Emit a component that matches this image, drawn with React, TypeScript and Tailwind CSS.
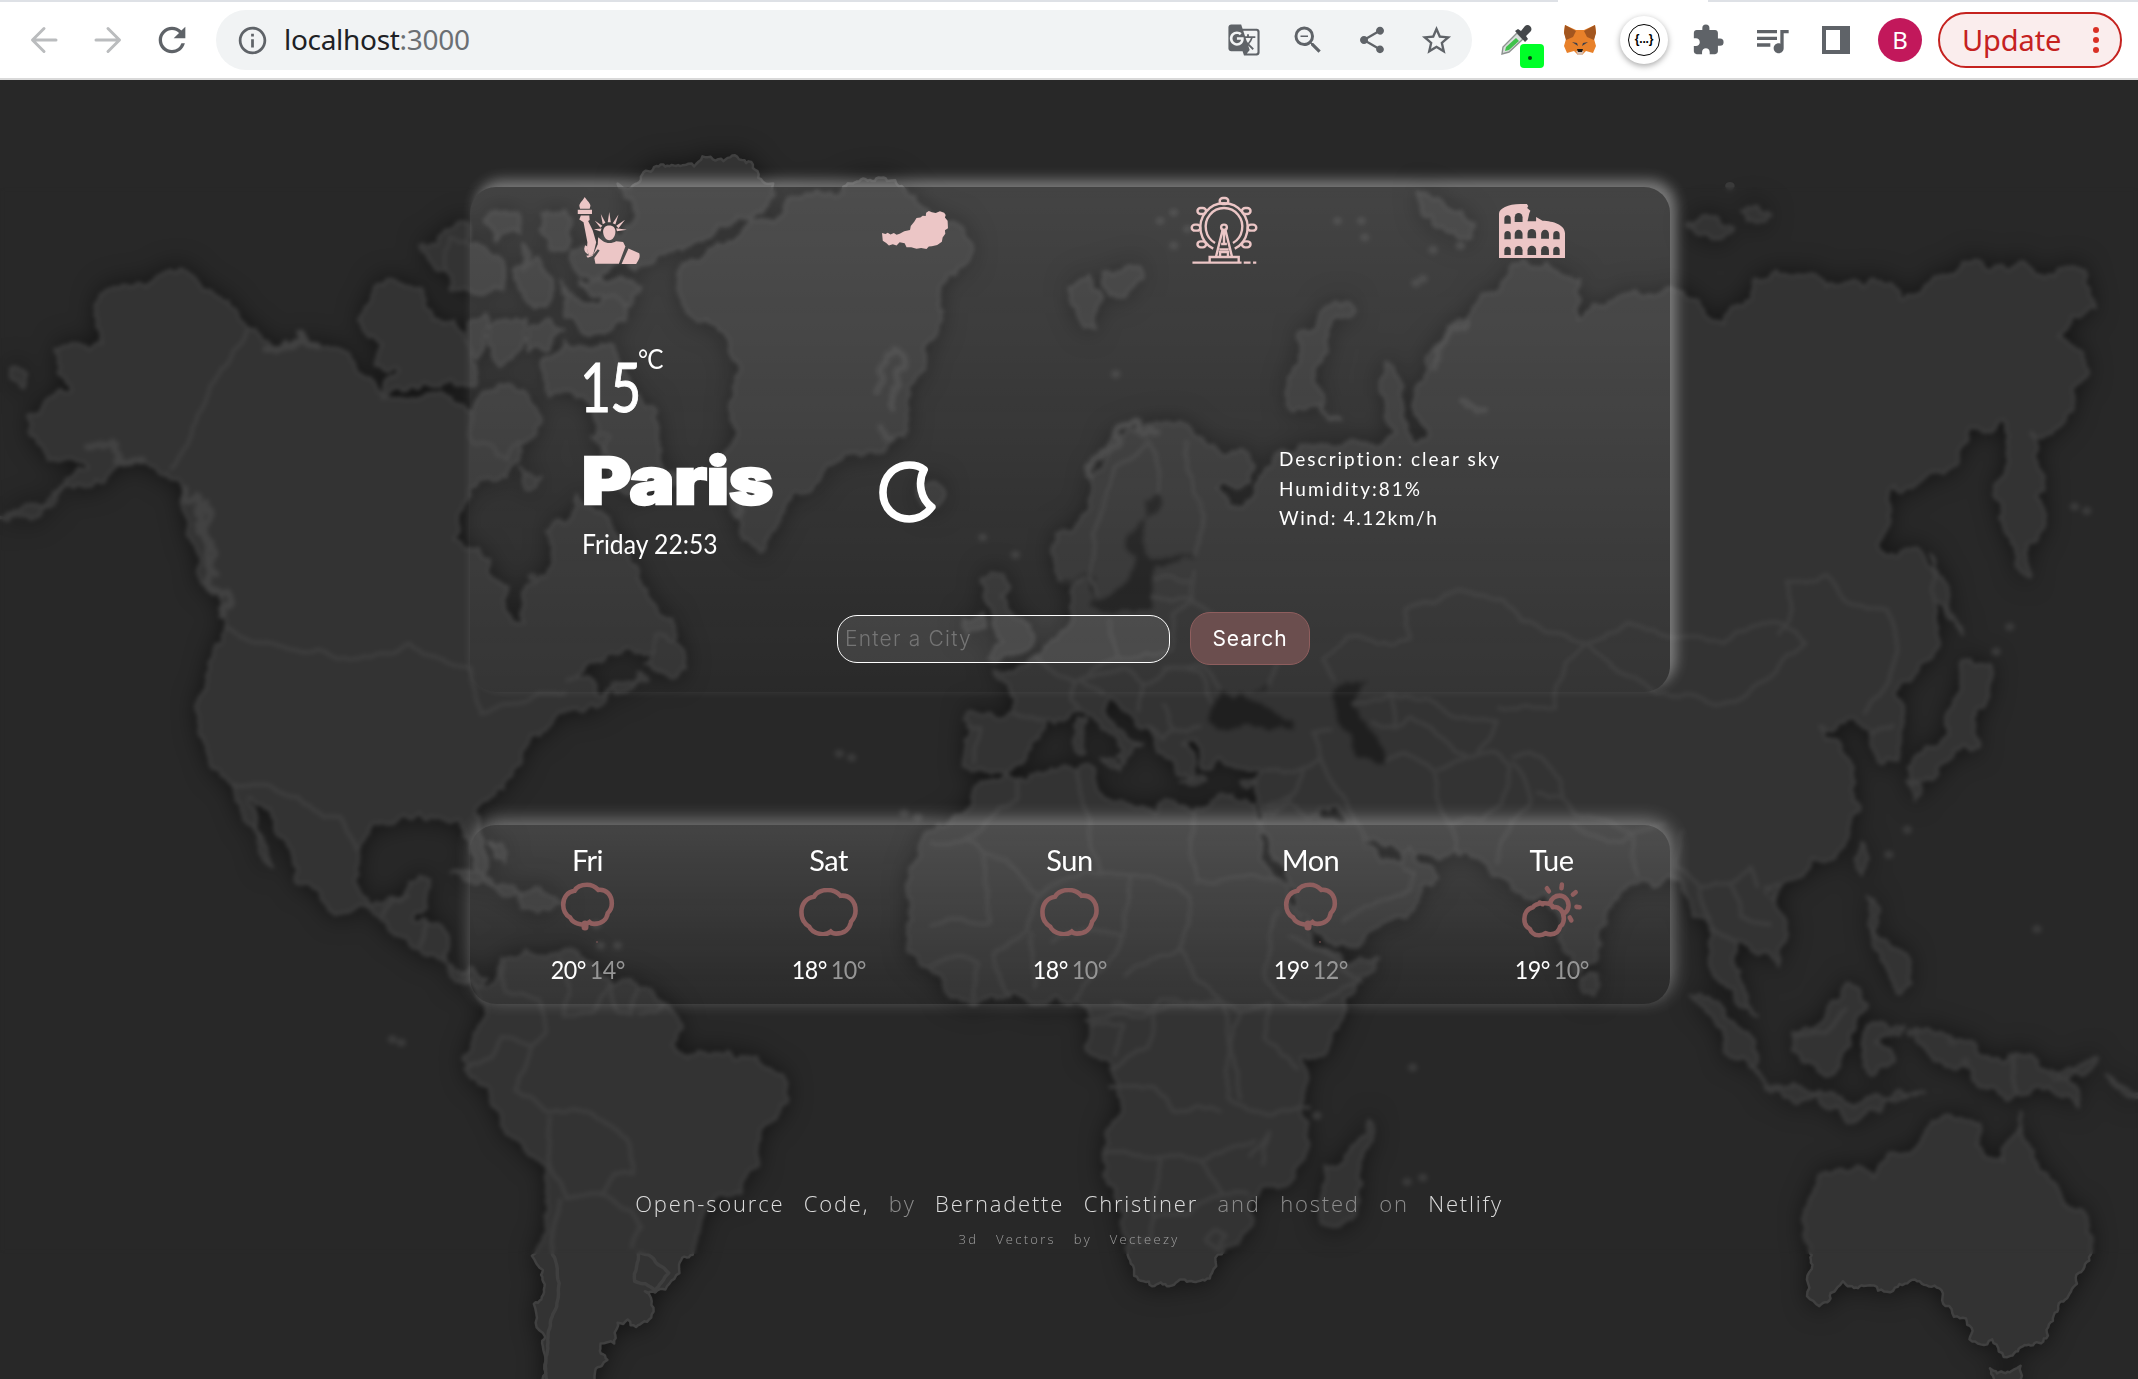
import React from "react";
import {
  MdExtension,
  MdGTranslate,
  MdInfoOutline,
  MdQueueMusic,
  MdRefresh,
  MdShare,
  MdStarBorder,
  MdZoomOut,
} from "react-icons/md";

/* ------------------------------------------------------------------ */
/* World map                                                           */
/* ------------------------------------------------------------------ */

type Pt = [number, number];

// A frame places a regional coordinate grid on the world grid.
type Frame = { x: number; y: number; sx: number; sy: number };

const WORLD: Frame = { x: 0, y: 0, sx: 1, sy: 1 };
const EAST: Frame = { x: 1566, y: 0, sx: 1, sy: 1 };
const MID: Frame = { x: 1362.8, y: 386.3, sx: 0.7103, sy: 0.5389 };
const ARCTIC: Frame = { x: 659, y: 96.6, sx: 0.5608, sy: 0.4024 };

const parse = (s: string, f: Frame = WORLD): Pt[] =>
  s
    .trim()
    .split(/\s+/)
    .map((p) => {
      const [x, y] = p.split(",").map(Number);
      return [f.x + x * f.sx, f.y + y * f.sy] as Pt;
    });

// Deterministic noise, so that every render draws the same coast.
const noise = (x: number, y: number) => {
  const v = Math.sin(x * 12.9898 + y * 78.233) * 43758.5453;
  return (v - Math.floor(v)) * 2 - 1;
};

// Midpoint displacement gives a plain polygon an irregular coast.
const split = (a: Pt, b: Pt, rough: number, out: Pt[]) => {
  const dx = b[0] - a[0];
  const dy = b[1] - a[1];
  const len = Math.hypot(dx, dy);
  if (len < 6) {
    out.push(b);
    return;
  }
  const k = noise(a[0] + b[0], a[1] + b[1]) * rough;
  const m: Pt = [(a[0] + b[0]) / 2 - dy * k, (a[1] + b[1]) / 2 + dx * k];
  split(a, m, rough, out);
  split(m, b, rough, out);
};

const coast = (pts: Pt[], closed: boolean, rough: number) => {
  const out: Pt[] = [pts[0]];
  for (let i = 1; i < pts.length; i++) split(pts[i - 1], pts[i], rough, out);
  if (closed) split(pts[pts.length - 1], pts[0], rough, out);
  return "M" + out.map((p) => p[0].toFixed(1) + " " + p[1].toFixed(1)).join("L") + (closed ? "Z" : "");
};

const eurasia: Pt[] = [
  ...parse(
    "100,825 68,820 72,760 85,740 70,715 85,697 170,700 178,670 150,625 132,605 180,600 215,575 245,545 270,520 295,490 290,430 315,400 265,402 250,340 260,300 310,270 335,200 360,140 400,80 460,55 490,50 560,85 640,110 670,150 660,185 600,185 590,198 620,240 665,220 690,160",
    MID,
  ),
  ...parse(
    "1896,450 1946,440 2006,440 2046,425 2026,380 2031,340 2056,370 2076,440 2094,430 2076,370 2096,330 2136,290 2206,240 2266,220 2316,240 2311,290 2366,265 2426,260 2446,250 2486,265 2526,295 2566,265 2571,240 2636,235 2676,250 2746,240 2786,265 2856,235 2876,220 2966,220 3056,230 3071,275 3036,285 3016,310 3061,355 3036,375 3016,420 2976,425 2996,480 2996,530 2976,600 2936,540 2921,500 2941,450 2936,410 2886,420 2866,465 2776,490 2751,560 2816,570 2836,630 2826,700 2776,740 2785,800 2781,822 2756,825 2741,790 2716,770 2666,780 2696,800 2716,830 2726,880 2696,930 2626,965 2586,980 2616,1040 2606,1070 2566,1050 2546,1040 2551,1090 2576,1130 2526,1090 2506,1020 2481,1010 2446,960 2396,970 2356,1000 2341,1060 2306,1080 2286,1040 2266,980 2246,990 2186,960 2106,940",
  ),
  ...parse(
    "940,1000 885,950 870,945 740,960 690,930 685,830 640,825 560,825 548,760 520,770 545,850 510,840 470,790 450,730 410,700 370,665 360,690 400,745 440,770 415,790 400,815 385,800 400,785 370,745 325,705 305,692 240,715 200,790 135,832",
    MID,
  ),
];

const africa: Pt[] = [
  ...parse("110,855 60,930 5,965", MID),
  ...parse(
    "1332,966 1329,1030 1347,1066 1383,1094 1424,1116 1496,1106 1544,1106 1566,1115 1596,1125 1591,1165 1631,1195 1641,1250 1616,1297 1636,1340 1656,1400 1676,1450 1726,1450 1776,1440 1826,1390 1856,1335 1916,1280 1916,1200 1906,1180 1966,1135 2021,1060 1966,1065 1926,1050 1896,1000 1846,915",
  ),
  ...parse("690,960 670,905 545,920 480,900 465,930 400,900 350,880 340,825 250,825 180,850 130,850", MID),
];

const land: Pt[][] = [
  africa,
  eurasia,
  ...[
    // North America
    "-5,524 40,512 90,490 130,468 112,460 70,458 60,440 42,425 40,405 75,382 105,375 85,352 80,325 110,318 150,318 140,270 190,250 235,235 275,232 310,255 340,275 365,300 395,318 405,330 440,318 480,322 500,325 520,345 545,362 560,380 600,385 640,378 690,400 740,420 760,460 715,480 675,520 665,555 700,565 720,600 745,612 752,655 768,655 772,610 800,600 810,575 800,545 835,530 845,500 880,520 905,560 935,590 950,625 985,650 990,675 960,690 900,692 860,705 830,725 870,725 880,745 935,715 950,725 880,755 830,760 800,785 765,810 750,840 720,865 695,885 702,905 714,945 705,962 690,930 675,895 640,890 615,885 580,895 545,898 530,920 522,950 530,985 560,995 590,990 600,968 630,965 625,1000 605,1015 640,1018 655,1030 650,1055 665,1075 690,1070 715,1085 705,1098 690,1088 660,1082 620,1055 590,1035 555,1010 510,1005 470,985 435,970 430,945 405,910 385,875 365,866 375,900 400,950 380,930 360,895 340,850 310,830 292,790 290,750 305,715 325,680 330,660 300,610 285,560 270,500 245,475 200,460 170,465 130,490 80,510 30,525",
    "525,290 545,265 570,240 620,255 635,290 665,290 690,320 695,370 650,365 600,370 560,385 585,350 550,345 560,320 535,305",
    "905,125 950,110 1000,103 1060,98 1110,110 1133,125 1125,150 1080,165 1040,190 1000,205 960,215 930,230 900,215 880,190 930,170 915,140",
    "615,200 660,180 685,172 680,200 700,220 690,250 640,230",
    "960,670 990,680 1005,710 985,722 960,712 945,705",
    "15,348 40,355 35,372 20,362",
    // Greenland and Iceland
    "995,230 1030,215 1060,200 1100,170 1150,150 1200,135 1250,125 1300,122 1340,140 1370,165 1425,200 1400,235 1375,270 1370,310 1355,350 1330,400 1325,430 1290,450 1235,455 1190,495 1160,500 1140,535 1115,570 1090,555 1070,510 1060,470 1080,430 1070,400 1075,370 1070,320 1050,295 1020,290 1000,265",
    "1345,490 1370,485 1385,500 1372,515 1350,512",
    // Caribbean
    "660,957 700,953 740,972 770,985 740,985 690,968",
    "760,990 800,982 825,995 790,1004 765,1000",
    "715,920 735,922 740,945 725,938",
    // South America
    "690,1085 715,1095 735,1060 770,1050 810,1055 850,1060 880,1080 930,1090 975,1115 1000,1145 985,1165 1050,1175 1110,1180 1150,1205 1155,1230 1120,1262 1112,1310 1085,1345 1040,1360 1020,1395 995,1430 975,1460 945,1462 955,1490 905,1500 900,1525 880,1525 890,1545 865,1580 790,1580 785,1500 797,1460 800,1380 800,1310 760,1280 725,1240 690,1205 678,1180 695,1150 710,1115",
  ].map((s) => parse(s)),
  ...[
    // Canadian archipelago
    "90,180 180,160 185,220 120,245",
    "240,160 300,150 310,260 260,265 235,210",
    "0,230 90,260 145,330 140,390 60,400 0,390",
    "165,330 230,290 262,350 250,440 200,420",
    "290,360 370,430 460,420 460,480 410,515 300,470",
    "340,375 430,405 470,440 500,380 430,360 340,360",
    "190,250 208,300 192,330",
    "320,270 380,260 440,300 400,340 330,330",
    "60,480 95,460 70,600 50,560",
    "100,500 200,475 190,560 130,620",
    "210,500 300,510 205,575",
    "240,600 300,540 430,560 470,660 500,720 545,800 600,950 480,1010 420,940 400,860 380,780 260,710",
    "70,720 200,700 240,780 150,900 60,850",
    "180,920 240,950 200,990",
    "370,830 420,830 400,890",
  ].map((s) => parse(s, ARCTIC)),
  ...[
    "690,930 740,900 800,930 870,945 900,1000 930,1035 975,1040 990,1000 1000,1030 1048,1070 1000,1130 930,1175 820,1215 790,1180 740,1080 690,970",
    "305,710 325,715 320,790 300,785",
    "515,855 570,850 540,862",
    "640,855 670,850 655,870",
    "352,803 398,812 392,830",
    "105,400 150,390 165,420 145,440 185,490 215,530 200,560 120,580 150,545 130,500 120,460",
    "70,490 110,475 115,510 75,530",
  ].map((s) => parse(s, MID)),
  ...[
    "0,250 30,235 50,262 40,300 14,285",
    "50,232 104,225 109,240 70,262",
    "330,400 335,310 370,280 410,268 420,280 380,300 360,350 370,400 400,410",
    "510,135 550,150 595,175 590,190 540,178",
    "905,175 950,165 975,180 940,190",
    "985,158 1030,163 1010,172",
    "1262,572 1290,620 1310,670 1290,650 1270,600",
    "1310,700 1350,705 1330,760 1335,805 1290,820 1235,845 1230,830 1290,790 1305,740",
    "1228,845 1248,850 1240,870",
    "1162,920 1172,940 1162,960 1152,940",
    "1020,975 1040,970 1035,990",
    "1170,985 1188,1000 1180,1030 1215,1050 1235,1090 1215,1103 1190,1060 1172,1020",
    "910,1105 960,1130 1010,1180 1022,1212 970,1180",
    "1020,1215 1100,1220 1180,1225 1255,1222 1190,1245 1100,1232",
    "1060,1150 1100,1140 1140,1090 1170,1115 1145,1150 1130,1190 1075,1185",
    "1165,1150 1225,1142 1182,1162 1210,1185 1182,1200 1165,1190",
    "1240,1145 1280,1150 1320,1160 1390,1175 1430,1195 1480,1240 1420,1215 1380,1230 1330,1210 1280,1185",
    "1440,1195 1480,1190 1508,1180 1490,1200 1460,1206",
    "1520,1200 1570,1225 1560,1228",
    "1080,1385 1090,1345 1180,1325 1210,1295 1250,1280 1275,1255 1335,1260 1330,1285 1370,1305 1395,1245 1420,1310 1455,1350 1492,1390 1480,1440 1450,1480 1425,1525 1380,1540 1320,1520 1315,1495 1285,1480 1240,1448 1180,1455 1100,1480 1082,1468 1090,1430",
    "1350,1555 1395,1552 1385,1580 1360,1580",
    "440,1255 445,1280 400,1380 370,1380 375,1310 420,1285",
    "750,1085 775,1080 770,1105 755,1102",
  ].map((s) => parse(s, EAST)),
];

const water: Pt[][] = [
  "575,720 600,650 625,670 640,655 660,670 700,690 750,720 750,738 700,740 650,725 610,740",
  "830,660 860,630 900,630 870,680 910,740 938,815 880,800 870,750",
  "668,655 695,637 690,652",
  "268,408 290,412 325,390 340,440 330,460 350,470 420,475 460,465 455,440 465,370 500,365 545,355 540,345 480,355 445,345 440,290 450,260 480,230 470,210 445,225 440,270 410,300 405,335 425,350 410,400 370,440 343,452 345,420 328,385",
].map((s) => parse(s, MID));

const borders: Pt[][] = [
  ...[
    "365,300 250,470",
    "330,660 600,680 690,710 705,765 790,740 830,740",
    "340,850 435,865 475,890 500,890 522,930",
    "560,1010 575,990 600,985",
    "625,1015 615,1045",
    "680,1195 720,1180 735,1155 780,1165",
    "780,1165 760,1205 755,1220 800,1245 860,1245 920,1280 928,1320 900,1320 880,1345 830,1350 805,1310 805,1250",
    "820,1350 808,1400 818,1470 800,1580",
    "880,1345 925,1365 940,1385 925,1410",
    "935,1415 930,1450 960,1462 980,1440 950,1418 935,1415",
    "735,1060 740,1100 790,1110 800,1150 780,1165",
    "820,1060 835,1100 825,1130 870,1125 895,1090",
    "895,1090 905,1125 925,1128 935,1095",
    "935,1128 960,1125 975,1115",
    "1590,1135 1680,1130 1700,1110 1790,1115",
    "1625,1215 1690,1215 1720,1245 1790,1245",
    "1790,1115 1800,1160 1800,1230 1860,1250 1920,1240",
    "1616,1297 1700,1300 1760,1305 1800,1290 1840,1280",
    "1700,1300 1690,1350 1686,1400 1656,1405",
    "1760,1305 1790,1345 1830,1345",
    "1690,1370 1740,1370 1790,1345",
    "1766,1400 1780,1388 1796,1395 1785,1412 1766,1400",
    "1830,1300 1860,1270 1850,1310",
  ].map((s) => parse(s)),
  ...[
    "75,730 105,735 90,815",
    "170,700 235,715",
    "215,575 255,610 300,630 290,670 310,690",
    "370,490 390,580 340,600 310,630 360,660",
    "390,580 500,560 500,480 540,450 600,490 620,560 720,570 700,640",
    "400,600 440,640 490,600 560,610 580,680",
    "440,640 430,700",
    "480,680 500,740 560,730",
    "480,600 570,600 600,650",
    "455,440 540,445 545,380",
    "460,400 540,410",
    "345,440 330,400 335,300 380,150 450,90",
    "450,90 470,150 470,210",
    "530,90 530,150 565,260 545,350",
    "290,630 330,620 400,600",
    "450,730 480,760 500,740",
    "180,850 180,895 60,990 0,990",
    "75,985 225,1110 355,1060 415,1065 535,1110",
    "305,830 310,880 330,940 330,1000 355,1060",
    "545,920 550,1080 550,1075 715,1075",
    "110,1020 125,1170 0,1180",
    "535,1110 535,1170 515,1230 600,1345",
    "415,1065 400,1190 375,1250 300,1345",
    "225,1110 200,1190 130,1240",
    "250,1215 400,1200",
    "210,1190 215,1320",
    "400,1290 515,1230",
    "375,1350 500,1355 600,1345 640,1370 700,1350",
    "720,1140 700,1240 690,1290 740,1350 800,1350",
    "740,1200 820,1240 890,1300 800,1350",
    "700,1350 690,1430 760,1500",
    "640,1370 620,1450 640,1568",
    "460,1360 450,1450 370,1500",
    "330,1400 400,1400 380,1470",
    "90,1350 100,1260 40,1250 0,1270",
    "130,1240 165,1340",
    "690,830 770,825 755,875 690,910",
    "770,825 805,800 860,900 880,945",
    "805,800 790,745 830,740",
    "755,875 740,900 700,930",
    "990,1100 1000,1060 975,1050",
    "990,1100 915,1130 850,1170",
    "940,810 980,790 1040,830 1045,870 1070,950 1090,1020",
    "1045,830 1110,800 1170,790 1195,820 1180,900 1140,940 1070,950",
    "910,720 960,735 990,710 1070,770 1110,800",
    "960,735 950,660 1030,670 1080,710 1170,720 1130,790",
    "1170,690 1290,690 1290,650 1310,590 1355,545",
    "1200,810 1230,860 1240,900 1190,970 1170,1040",
    "1200,800 1240,790 1300,850 1305,890 1250,880",
    "1305,890 1330,930 1450,970 1520,950",
    "1325,950 1430,990 1450,970 1460,1070",
    "870,680 950,660",
    "835,630 810,580 860,530 920,545 990,535 980,470 1090,425 1185,450 1270,520 1355,545",
  ].map((s) => parse(s, MID)),
  ...[
    "760,680 820,655 870,670 960,680 1040,655 1080,680 1030,720 950,755 860,740 800,710 760,680",
    "1040,670 1060,640 1052,605 1110,597 1140,630 1200,640 1215,690 1165,765",
    "900,905 890,950 925,975 940,1020",
    "925,975 970,970 1000,950 1010,975",
    "970,970 985,1010 1030,1020",
    "940,1020 980,1040",
    "1175,790 1210,780",
    "1388,1175 1390,1225",
    "1065,1155 1110,1150 1140,1120",
  ].map((s) => parse(s, EAST)),
];

const specks: Pt[] = [
  [575, 1158], [588, 1162], [1230, 813], [1248, 818], [1440, 552], [1488, 573], [1325, 885], [1345, 890],
  [1930, 1250], [2070, 1192], [2062, 1330], [2085, 1325], [2985, 1025], [3040, 515], [3058, 520],
  [2795, 905], [2768, 935], [780, 600], [1960, 170], [2000, 190], [2075, 245], [2140, 200],
  [1635, 355], [1995, 170], [2860, 1160], [2880, 1185], [2800, 1150], [2925, 690], [2945, 660], [2535, 128],
  [880, 1045], [874, 1020], [905, 1045], [2100, 205], [2085, 240], [1700, 170], [1720, 160], [1740, 180],
  [1720, 200], [1880, 450],
];

// Fjord coasts: short rough strokes along the shore.
const fjords: Pt[][] = [
  "270,490 290,545 305,600 325,650",
  "285,500 300,545 318,600",
  "125,445 160,440 210,455",
  "385,325 410,325 470,320",
  "1285,380 1320,330 1310,400",
  "1290,415 1310,430",
  "1090,480 1080,530",
  "1600,480 1640,440 1700,425",
  "2100,350 2120,310 2150,290",
  "2140,390 2180,400",
].map((s) => parse(s));

function WorldMap() {
  return (
    <svg
      className="absolute inset-0 h-full w-full"
      viewBox="0 0 3133 1568"
      preserveAspectRatio="none"
      aria-hidden="true"
    >
      <g
        className="fill-[#333333] stroke-[#404040] [filter:drop-shadow(0_0_16px_rgba(0,0,0,0.55))]"
        strokeWidth={2.5}
        strokeLinejoin="round"
      >
        {land.map((p, i) => (
          <path key={i} d={coast(p, true, 0.24)} vectorEffect="non-scaling-stroke" />
        ))}
      </g>
      <g className="fill-[#1f1f1f] stroke-[#2a2a2a]" strokeWidth={2}>
        {water.map((p, i) => (
          <path key={i} d={coast(p, true, 0.16)} vectorEffect="non-scaling-stroke" />
        ))}
      </g>
      <g className="fill-none stroke-[#3f3f3f]" strokeWidth={3.5} strokeLinejoin="round">
        {borders.map((p, i) => (
          <path key={i} d={coast(p, false, 0.1)} vectorEffect="non-scaling-stroke" />
        ))}
      </g>
      <g className="fill-none stroke-[#424242]" strokeWidth={6} strokeLinejoin="round">
        {fjords.map((p, i) => (
          <path key={i} d={coast(p, false, 0.45)} vectorEffect="non-scaling-stroke" />
        ))}
      </g>
      {specks.map(([x, y], i) => (
        <ellipse key={i} cx={x} cy={y} rx={7} ry={5} className="fill-[#3a3a3a]" />
      ))}
    </svg>
  );
}

/* ------------------------------------------------------------------ */
/* City icons                                                          */
/* ------------------------------------------------------------------ */

function Liberty() {
  return (
    <svg viewBox="332 112 164 200" preserveAspectRatio="none" className="h-[67px] w-[63px] fill-[#ecc6c6]">
      <path d="M352 112c4 8 14 17 15 26l-2 9h-25l-2-9c1-9 11-18 14-26Z" />
      <path d="M334 150h37v13h-37zM342 167h22l1 14-4 3 12 28 9 35-8 37-11 4-5-22 1-19-10-60-11-8Z" />
      <path d="M416 197c11 0 16 8 16 18 0 14-7 26-16 26s-16-12-16-26c0-10 5-18 16-18Z" />
      <path d="M416 157l4 30h-8zM394 163l12 26-7 4zM440 164l-8 30-7-4zM378 182l20 16-5 6zM457 180l-17 25-6-7zM376 208l20-2-3 9zM462 210l-26 4-2-9z" />
      <path d="M387 232l13 12c9 7 24 7 34 0l18 2 6 14-17 51h-61l-3-17 14-22-5-4-14 20-12 5-4-6 18-2 12-32Z" />
      <path d="M353 256l6 4 2 24c-6-4-11-11-10-18Z" />
      <path d="M466 266l28 14c4 13-3 23-8 32h-38Z" />
    </svg>
  );
}

function Austria() {
  return (
    <svg viewBox="1132 155 172 112" preserveAspectRatio="none" className="mb-px h-[38px] w-[66px] fill-[#ecc6c6]">
      <path d="M1132 220L1141 223L1147 219L1154 224L1163 220L1170 225L1178 222L1190 215L1205 211L1207 199L1216 187L1222 176L1232 174L1238 169L1246 170L1247 160L1254 155L1262 159L1272 161L1283 156L1294 160L1298 167L1296 174L1303 184L1304 206L1296 212L1297 222L1290 233L1288 246L1276 255L1262 259L1254 260L1248 267L1234 264L1222 266L1208 262L1196 262L1191 250L1178 247L1170 257L1160 253L1150 257L1143 249L1134 243Z" />
    </svg>
  );
}

function FerrisWheel() {
  const cabins: [number, number][] = [
    [145, 153], [269, 153], [129, 203], [285, 203], [145, 253], [269, 253], [207, 123],
  ];
  return (
    <svg
      viewBox="115 111 184 201"
      preserveAspectRatio="none"
      className="h-[67px] w-[66px] overflow-visible fill-none stroke-[#ecc6c6]"
      strokeWidth={2.4}
    >
      <path d="M177 266A66 72 0 1 1 237 266" vectorEffect="non-scaling-stroke" />
      <path d="M182 249A51 56 0 1 1 232 249" vectorEffect="non-scaling-stroke" />
      {cabins.map(([x, y], i) => (
        <rect key={i} x={x - 12} y={y - 9} width={24} height={18} rx={9} vectorEffect="non-scaling-stroke" />
      ))}
      <circle cx={207} cy={202} r={8} vectorEffect="non-scaling-stroke" />
      <path
        d="M203 210L185 289M211 210L229 289M207 212V250M199 252h16M194 268h26M196 288v-12h22v12M167 308V291H248V308M119 308H256M262 308H281M288 308H297"
        vectorEffect="non-scaling-stroke"
      />
    </svg>
  );
}

function Colosseum() {
  const arches: [number, number, number][] = [
    [1001, 190, 9], [1032, 185, 11],
    [1001, 237, 9], [1032, 235, 11], [1069, 234, 12], [1106, 235, 11], [1138, 237, 9],
    [1001, 284, 9], [1032, 284, 11], [1069, 284, 12], [1106, 284, 11], [1138, 284, 9],
  ];
  return (
    <svg viewBox="977 131 185 162" preserveAspectRatio="none" className="h-[54px] w-[66px]">
      <path
        className="fill-[#ecc6c6]"
        d="M977 293V160c0-15 25-29 60-29h18l4 6-3 6 9 8-3 8-5 24h24v-13l18 11c30 1 63 12 63 38v74Z"
      />
      {arches.map(([x, y, r], i) => (
        <path
          key={i}
          className="fill-[#404040]"
          d={`M${x - r} ${y}v-14a${r} ${r + 2} 0 0 1 ${2 * r} 0v14Z`}
        />
      ))}
    </svg>
  );
}

/* ------------------------------------------------------------------ */
/* Weather icons                                                       */
/* ------------------------------------------------------------------ */

const cloudPath =
  "M892 292C898 279 912 272 926 272C940 272 950 280 957 289C979 286 994 306 994 334C994 350 988 360 983 366C980 388 966 402 946 402C940 402 936 400 933 396C926 403 916 405 908 403C894 400 884 392 880 381C868 372 861 356 861 338C861 314 873 295 892 292Z";

function Cloud() {
  return (
    <svg
      viewBox="855 266 145 143"
      preserveAspectRatio="none"
      className="mt-[5px] h-[48px] w-[59px] fill-none stroke-[#8f5e5e]"
      strokeWidth={4.6}
    >
      <path d={cloudPath} vectorEffect="non-scaling-stroke" />
    </svg>
  );
}

function RainCloud() {
  return (
    <svg viewBox="0 0 53 60" className="h-[60px] w-[53px] overflow-visible">
      <g transform="scale(0.3655 0.3007) translate(-855 -266)">
        <path d={cloudPath} className="fill-none stroke-[#8f5e5e]" strokeWidth={4.6} vectorEffect="non-scaling-stroke" />
      </g>
      <path d="M24 41v3" className="stroke-[#8f5e5e]" strokeWidth={7} strokeLinecap="round" />
      <circle cx={36} cy={59} r={0.8} className="fill-[#8f5e5e]" />
    </svg>
  );
}

function SunCloud() {
  return (
    <svg
      viewBox="1118 248 152 166"
      preserveAspectRatio="none"
      className="-mt-px h-[55px] w-[60px] overflow-visible fill-none stroke-[#8f5e5e]"
      strokeWidth={4.6}
      strokeLinecap="round"
      strokeLinejoin="round"
    >
      <path
        vectorEffect="non-scaling-stroke"
        d="M1146 324C1152 312 1190 305 1196 324C1212 321 1224 336 1224 358C1224 370 1220 378 1215 382C1212 396 1204 406 1190 406C1184 406 1180 404 1178 402C1170 410 1154 412 1146 403C1142 400 1140 396 1138 390C1128 384 1124 374 1124 360C1124 342 1132 328 1146 324ZM1190 310C1192 298 1202 289 1213 289C1226 289 1236 302 1236 319C1236 329 1232 337 1226 342M1163 310L1170 315"
      />
      <path
        vectorEffect="non-scaling-stroke"
        d="M1181 267L1186 276M1219 256L1218 267M1254 279L1247 286M1256 323L1264 324M1239 355L1243 364"
      />
    </svg>
  );
}

function Moon() {
  return (
    <svg
      viewBox="1118 902 152 187"
      preserveAspectRatio="none"
      className="h-[62px] w-[58px] overflow-visible fill-none stroke-white"
      strokeWidth={7.6}
      strokeLinejoin="round"
    >
      <path
        vectorEffect="non-scaling-stroke"
        d="M1239 928C1227 917 1215 914 1200 914C1160 914 1131 950 1131 997C1131 1043 1160 1077 1200 1077C1225 1077 1244 1064 1259 1041C1231 1018 1220 967 1239 928Z"
      />
    </svg>
  );
}

/* ------------------------------------------------------------------ */
/* Browser toolbar                                                     */
/* ------------------------------------------------------------------ */

function Slot({ children }: { children: React.ReactNode }) {
  return <div className="relative flex h-[60px] w-16 shrink-0 items-center justify-center">{children}</div>;
}

function Arrow({ flip }: { flip?: boolean }) {
  return (
    <svg
      viewBox="0 0 28 28"
      className={"h-7 w-7 fill-none stroke-[#babcbe] " + (flip ? "rotate-180" : "")}
      strokeWidth={3}
      strokeLinecap="round"
      strokeLinejoin="round"
    >
      <path d="M26 14H3M14 2.500L2.500 14L14 25.500" />
    </svg>
  );
}

function Dropper() {
  return (
    <svg viewBox="0 0 32 32" className="h-8 w-8">
      <path d="M2 30l1-7L17 9l6 6L9 28Z" className="fill-[#d9dedb] stroke-[#8d9290]" strokeWidth={1.4} />
      <path d="M5 27l1-4 10-9 3 3-10 9Z" className="fill-[#3fc24b]" />
      <path d="M15 7l3-2 3 2 4-5c3-3 8 1 6 5l-5 5 2 3-3 3Z" className="fill-[#44474a]" />
    </svg>
  );
}

function Fox() {
  return (
    <svg viewBox="0 0 32 30" className="h-[30px] w-8">
      <path d="M1 0l11 5h8L31 0l1 7-2 7 2 7-3 7-7-2-4 4h-4l-4-4-7 2-3-7 2-7-2-7Z" className="fill-[#e8812a]" />
      <path d="M1 0l11 6-3 6-7 3L0 8ZM31 0L20 6l3 6 7 3 2-7Z" className="fill-[#a3561f]" />
      <path d="M8 17l5 1 1 3ZM24 17l-5 1-1 3Z" className="fill-[#3a3f4c]" />
      <path d="M12 26h8l-2 4h-4Z" className="fill-[#d5bfb2]" />
      <path d="M13 24h6l-1 3h-4Z" className="fill-[#191919]" />
    </svg>
  );
}

function Toolbar() {
  return (
    <header className="flex h-20 items-center border-b-2 border-b-[#d9d9d9] bg-white pl-3 bg-[linear-gradient(to_right,#dee1e6_1558px,transparent_1558px,transparent_1708px,#dee1e6_1708px)] bg-[length:2138px_2px] bg-no-repeat pt-0.5">
      <Slot><Arrow /></Slot>
      <Slot><Arrow flip /></Slot>
      <Slot><MdRefresh className="h-10 w-10 text-[#5f6368]" /></Slot>
      <div className="ml-3 flex h-[60px] w-[1256px] items-center rounded-full bg-[#f1f3f4] pr-1 pl-5">
        <MdInfoOutline className="h-[33px] w-[33px] text-[#5f6368]" />
        <div className="ml-[15px] flex-1 pb-0.5 font-['Noto_Sans',sans-serif] text-[28px] leading-none tracking-[-0.3px] text-[#202124]">
          localhost<span className="text-[#6b6f73]">:3000</span>
        </div>
        <Slot><MdGTranslate className="h-[34px] w-[34px] text-[#5f6368]" /></Slot>
        <Slot><MdZoomOut className="h-9 w-9 text-[#5f6368]" /></Slot>
        <Slot><MdShare className="h-8 w-8 text-[#5f6368]" /></Slot>
        <Slot><MdStarBorder className="h-[35px] w-[35px] text-[#5f6368]" /></Slot>
      </div>
      <div className="ml-3 flex items-center">
        <Slot>
          <Dropper />
          <span className="absolute top-[34px] left-9 flex h-6 w-6 items-center justify-center rounded bg-[#00ff28]">
            <span className="mt-1 mr-1 h-1 w-1 rounded-full bg-[#0b3d12]" />
          </span>
        </Slot>
        <Slot><Fox /></Slot>
        <Slot>
          <span className="flex h-12 w-12 items-center justify-center rounded-full bg-white shadow-[0_2px_6px_rgba(0,0,0,0.35)]">
            <span className="flex h-8 w-8 items-center justify-center rounded-full border-[1.5px] border-black pb-0.5 font-['Liberation_Sans',sans-serif] text-[12px] leading-none font-bold tracking-[-0.2px] text-black">
              {"{...}"}
            </span>
          </span>
        </Slot>
        <Slot><MdExtension className="h-[34px] w-[34px] text-[#5f6368]" /></Slot>
        <Slot><MdQueueMusic className="h-10 w-10 text-[#5f6368]" /></Slot>
        <Slot>
          <span className="h-7 w-7 border-4 border-r-[10px] border-[#5f6368]" />
        </Slot>
        <Slot>
          <span className="flex h-11 w-11 items-center justify-center rounded-full bg-[#c2185b] font-['Noto_Sans',sans-serif] text-[24px] leading-none text-white">
            B
          </span>
        </Slot>
      </div>
      <button className="ml-1.5 flex h-14 w-[184px] items-center rounded-full border-2 border-[#c5221f] bg-[#faeded] pb-0.5 pl-[22px] font-['Noto_Sans',sans-serif] text-[29px] leading-none tracking-[-0.1px] text-[#c5221f]">
        Update
        <span className="mt-0.5 mr-[21px] ml-auto flex w-1.5 flex-col gap-1">
          <span className="h-1.5 w-1.5 rounded-full bg-[#d93025]" />
          <span className="h-1.5 w-1.5 rounded-full bg-[#d93025]" />
          <span className="h-1.5 w-1.5 rounded-full bg-[#d93025]" />
        </span>
      </button>
    </header>
  );
}

/* ------------------------------------------------------------------ */
/* Page                                                                */
/* ------------------------------------------------------------------ */

const days = [
  { name: "Fri", max: 20, min: 14, icon: <RainCloud /> },
  { name: "Sat", max: 18, min: 10, icon: <Cloud /> },
  { name: "Sun", max: 18, min: 10, icon: <Cloud /> },
  { name: "Mon", max: 19, min: 12, icon: <RainCloud /> },
  { name: "Tue", max: 19, min: 10, icon: <SunCloud /> },
];

function CurrentWeather() {
  return (
    <section className="h-[505px] w-[1200px] rounded-[26px] bg-linear-to-b from-white/13 to-white/1 font-[Lato,sans-serif] text-white shadow-[6px_-7px_13px_rgba(255,255,255,0.38)]">
      <nav className="flex h-[87px] items-center justify-between pr-[105px] pl-[107px]">
        <Liberty />
        <Austria />
        <FerrisWheel />
        <Colosseum />
      </nav>
      <div className="flex h-[341px] pt-[71px] pl-28">
        <div className="w-[296px]">
          <div className="flex h-[72px] items-start">
            <span className="w-[56px] pt-[8px] text-[67px] leading-none tracking-[-1px]">
              <span className="-ml-[2px] inline-block origin-left scale-x-80 [-webkit-text-stroke:1px_white]">15</span>
            </span>
            <span className="origin-left scale-x-90 text-[27px] leading-none tracking-[-1px]">°C</span>
          </div>
          <h1 className="mt-[31px] h-[70px] origin-left scale-x-[1.155] font-[Inter,sans-serif] text-[65px] leading-none font-black [-webkit-text-stroke:2.500px_white]">
            Paris
          </h1>
          <p className="mt-[12px] w-max origin-left scale-x-[0.915] text-[27px] leading-none">Friday 22:53</p>
        </div>
        <div className="w-[401px] pt-[116px]">
          <Moon />
        </div>
        <ul className="pt-[99px] text-[19px] leading-[29.700px] tracking-[2px]">
          <li>Description: clear sky</li>
          <li>Humidity:81%</li>
          <li className="tracking-[1.600px]">Wind: 4.12km/h</li>
        </ul>
      </div>
      <form className="-mt-[3px] flex h-[53px] items-center justify-center gap-5 pl-[7px]">
        <input
          placeholder="Enter a City"
          className="h-12 w-[333px] rounded-[20px] border border-white bg-white/10 px-[7px] font-[Inter,sans-serif] text-[21px] font-light tracking-[1.200px] placeholder:text-[#757575]"
        />
        <button
          type="button"
          className="h-[53px] w-[120px] rounded-[20px] border border-[#8f5e5e] bg-[#6b4e4e] font-[Inter,sans-serif] text-[21px] tracking-[0.900px]"
        >
          Search
        </button>
      </form>
    </section>
  );
}

function Forecast() {
  return (
    <section className="mt-[133px] h-[179px] w-[1200px] rounded-[26px] bg-linear-to-b from-white/13 to-white/1 font-[Lato,sans-serif] text-white shadow-[3px_-5px_18px_rgba(255,255,255,0.38)]">
      <div className="-ml-[3px] grid w-[1205px] grid-cols-5">
        {days.map((d) => (
          <div key={d.name} className="flex flex-col items-center pt-5">
            <div className="h-[38px] text-[29px] leading-[30px] tracking-[-0.5px]">{d.name}</div>
            <div className="flex h-[71px] items-start">{d.icon}</div>
            <div className="scale-x-93 text-[25px] leading-[30px] tracking-[-0.5px]">
              {d.max}°<span className="ml-1 text-[#969696]">{d.min}°</span>
            </div>
          </div>
        ))}
      </div>
    </section>
  );
}

export default function App() {
  return (
    <div className="h-[1379px] w-[2138px] overflow-hidden bg-[#282828]">
      <Toolbar />
      <main className="relative h-[1299px]">
        <WorldMap />
        <div className="relative flex h-full flex-col pt-[107px]">
          <div className="flex h-[1067px] flex-col items-start pl-[470px] backdrop-blur-[2px]">
            <CurrentWeather />
            <Forecast />
            <footer className="w-[1198px] pt-[184px] text-center font-['Open_Sans',sans-serif] font-light">
              <p className="text-[22px] leading-[30px] tracking-[1.800px] text-[#8c8c8c] [word-spacing:12px]">
                <span className="text-[#dcdcdc]">Open-source Code,</span> by{" "}
                <span className="text-[#dcdcdc]">Bernadette Christiner</span> and hosted on{" "}
                <span className="text-[#dcdcdc]">Netlify</span>
              </p>
              <p className="mt-[11px] text-[13px] leading-5 tracking-[2.300px] text-[#a0a0a0] [word-spacing:12px]">
                3d Vectors by Vecteezy
              </p>
            </footer>
          </div>
        </div>
      </main>
    </div>
  );
}
